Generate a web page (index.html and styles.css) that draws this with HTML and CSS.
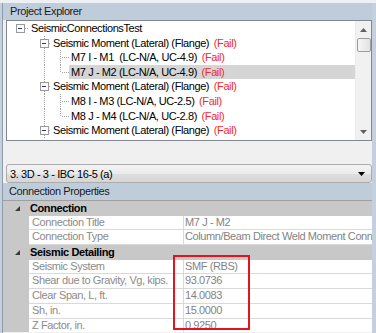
FILE: index.html
```html
<!DOCTYPE html>
<html>
<head>
<meta charset="utf-8">
<title>Project Explorer</title>
<link rel="stylesheet" href="styles.css">
</head>
<body>
<div class="window">
  <div class="frame">
    <div class="pane-title">Project Explorer</div>
    <div class="explorer">
      <div class="tree">
        <ul class="tree-list">
          <li class="node">
            <svg class="guides" width="22" height="14.6" viewBox="0 0 22 14.6">
              <line class="dot" x1="18" y1="7.5" x2="22" y2="7.5"/>
              <rect class="box" x="9.5" y="3.5" width="8" height="8"/>
              <line class="minus" x1="11.5" y1="7.5" x2="15.5" y2="7.5"/>
            </svg>
            <span class="label">SeismicConnectionsTest</span>
          </li>
          <li class="node">
            <svg class="guides" width="37" height="14.6" viewBox="0 0 37 14.6">
              <line class="dot" x1="30.5" y1="0" x2="30.5" y2="14.6"/>
              <line class="dot" x1="35" y1="7.5" x2="37" y2="7.5"/>
              <rect class="box" x="26.5" y="3.5" width="8" height="8"/>
              <line class="minus" x1="28.5" y1="7.5" x2="32.5" y2="7.5"/>
            </svg>
            <span class="label">Seismic Moment (Lateral) (Flange) <span class="fail">(Fail)</span></span>
          </li>
          <li class="node">
            <svg class="guides" width="55" height="14.6" viewBox="0 0 55 14.6">
              <line class="dot" x1="30.5" y1="0" x2="30.5" y2="14.6"/>
              <line class="dot" x1="46.5" y1="0" x2="46.5" y2="14.6"/>
              <line class="dot" x1="48" y1="7.5" x2="55" y2="7.5"/>
            </svg>
            <span class="label">M7 I - M1&nbsp; (LC-N/A, UC-4.9) <span class="fail">(Fail)</span></span>
          </li>
          <li class="node selected">
            <svg class="guides" width="55" height="14.6" viewBox="0 0 55 14.6">
              <line class="dot" x1="30.5" y1="0" x2="30.5" y2="14.6"/>
              <line class="dot" x1="46.5" y1="0" x2="46.5" y2="7.5"/>
              <line class="dot" x1="48" y1="7.5" x2="55" y2="7.5"/>
            </svg>
            <span class="label">M7 J - M2 (LC-N/A, UC-4.9) <span class="fail">(Fail)</span></span>
          </li>
          <li class="node">
            <svg class="guides" width="37" height="14.6" viewBox="0 0 37 14.6">
              <line class="dot" x1="30.5" y1="0" x2="30.5" y2="14.6"/>
              <line class="dot" x1="35" y1="7.5" x2="37" y2="7.5"/>
              <rect class="box" x="26.5" y="3.5" width="8" height="8"/>
              <line class="minus" x1="28.5" y1="7.5" x2="32.5" y2="7.5"/>
            </svg>
            <span class="label">Seismic Moment (Lateral) (Flange) <span class="fail">(Fail)</span></span>
          </li>
          <li class="node">
            <svg class="guides" width="55" height="14.6" viewBox="0 0 55 14.6">
              <line class="dot" x1="30.5" y1="0" x2="30.5" y2="14.6"/>
              <line class="dot" x1="46.5" y1="0" x2="46.5" y2="14.6"/>
              <line class="dot" x1="48" y1="7.5" x2="55" y2="7.5"/>
            </svg>
            <span class="label">M8 I - M3 (LC-N/A, UC-2.5) <span class="fail">(Fail)</span></span>
          </li>
          <li class="node">
            <svg class="guides" width="55" height="14.6" viewBox="0 0 55 14.6">
              <line class="dot" x1="30.5" y1="0" x2="30.5" y2="14.6"/>
              <line class="dot" x1="46.5" y1="0" x2="46.5" y2="7.5"/>
              <line class="dot" x1="48" y1="7.5" x2="55" y2="7.5"/>
            </svg>
            <span class="label">M8 J - M4 (LC-N/A, UC-2.8) <span class="fail">(Fail)</span></span>
          </li>
          <li class="node">
            <svg class="guides" width="37" height="14.6" viewBox="0 0 37 14.6">
              <line class="dot" x1="30.5" y1="0" x2="30.5" y2="14.6"/>
              <line class="dot" x1="35" y1="7.5" x2="37" y2="7.5"/>
              <rect class="box" x="26.5" y="3.5" width="8" height="8"/>
              <line class="minus" x1="28.5" y1="7.5" x2="32.5" y2="7.5"/>
            </svg>
            <span class="label">Seismic Moment (Lateral) (Flange) <span class="fail">(Fail)</span></span>
          </li>
        </ul>
        <div class="vscroll">
          <div class="sb-btn">
            <svg width="7" height="4" viewBox="0 0 7 4"><polygon points="0,4 3.5,0 7,4"/></svg>
          </div>
          <div class="sb-thumb"></div>
          <div class="sb-track"></div>
          <div class="sb-btn">
            <svg width="7" height="4" viewBox="0 0 7 4"><polygon points="0,0 7,0 3.5,4"/></svg>
          </div>
        </div>
      </div>
      <div class="combo">
        <span class="combo-text">3. 3D - 3 - IBC 16-5 (a)</span>
        <svg class="combo-arrow" width="7" height="4" viewBox="0 0 7 4"><polygon points="0,0 7,0 3.5,4"/></svg>
      </div>
    </div>
    <div class="pane-title props-title">Connection Properties</div>
    <div class="grid">
      <div class="cat">
        <span class="glyph"><svg width="5" height="5" viewBox="0 0 5 5"><polygon points="5,0 5,5 0,5"/></svg></span>Connection
      </div>
      <div class="prop"><span class="gut"></span><span class="name">Connection Title</span><span class="value">M7 J - M2</span></div>
      <div class="prop"><span class="gut"></span><span class="name">Connection Type</span><span class="value">Column/Beam Direct Weld Moment Connection</span></div>
      <div class="cat">
        <span class="glyph"><svg width="5" height="5" viewBox="0 0 5 5"><polygon points="5,0 5,5 0,5"/></svg></span>Seismic Detailing
      </div>
      <div class="prop"><span class="gut"></span><span class="name">Seismic System</span><span class="value">SMF (RBS)</span></div>
      <div class="prop"><span class="gut"></span><span class="name">Shear due to Gravity, Vg, kips.</span><span class="value">93.0736</span></div>
      <div class="prop"><span class="gut"></span><span class="name">Clear Span, L, ft.</span><span class="value">14.0083</span></div>
      <div class="prop"><span class="gut"></span><span class="name">Sh, in.</span><span class="value">15.0000</span></div>
      <div class="prop"><span class="gut"></span><span class="name">Z Factor, in.</span><span class="value">0.9250</span></div>
      <div class="mark"></div>
    </div>
  </div>
</div>
</body>
</html>
```

FILE: styles.css
```css
*{margin:0;padding:0;list-style:none;box-sizing:border-box;}
body{width:376px;height:333px;overflow:hidden;background:#c3d0dd;font-family:"Liberation Sans",Arial,sans-serif;font-size:11px;letter-spacing:-0.4px;color:#000;}
.window{border-top:3px solid #eef1f4;height:333px;}
.frame{margin-left:2px;width:370px;height:330px;border-left:1px solid #8f9cab;background:#f0f0f0;}

.pane-title{height:17px;line-height:17px;padding-left:7px;background:#bfcddb;color:#1b1b1b;white-space:nowrap;}
.props-title{padding-left:6px;}

.explorer{padding-left:3px;}
.tree{display:flex;width:366px;height:121px;border:1px solid #828790;background:#fff;}
.tree-list{width:348px;overflow:hidden;}
.node{display:flex;height:14.6px;align-items:stretch;}
.guides{flex:none;display:block;margin-left:7px;}
.guides .dot{stroke:#a0a0a0;stroke-width:1;stroke-dasharray:1 1;shape-rendering:crispEdges;}
.guides .box{fill:#fbfbfb;stroke:#9a9a9a;stroke-width:1;shape-rendering:crispEdges;}
.guides .minus{stroke:#2b3a4e;stroke-width:1;shape-rendering:crispEdges;}
.label{flex:1;padding-left:2px;line-height:14.6px;white-space:nowrap;}
.node:first-child .guides{margin-left:0;}
.node:first-child .label{padding-left:2px;}
.selected .label{background:#d5d5d5;}
.fail{color:#f02c2c;margin-left:2px;}

.vscroll{width:16px;display:flex;flex-direction:column;background:#f1f1f1;border-left:1px solid #ececec;}
.sb-btn{height:17px;display:flex;align-items:center;justify-content:center;}
.sb-btn polygon{fill:#5f5f5f;}
.sb-thumb{height:14px;margin:0 0 0 1px;border:1px solid #9d9d9d;border-radius:2px;background:linear-gradient(to right,#f6f6f6,#e3e3e3);}
.sb-track{flex:1;}

.combo{display:flex;align-items:center;margin-top:23px;width:366px;height:19px;border:1px solid #acacac;border-radius:3px;background:linear-gradient(#f3f3f3,#ebebeb 50%,#dedede 51%,#d6d6d6);padding:0 6px 0 3px;}
.combo-text{flex:1;white-space:nowrap;}
.combo-arrow polygon{fill:#000;}

.grid{position:relative;border-top:1px solid #a0a0a0;height:132px;overflow:hidden;}
.cat{display:flex;align-items:center;height:14.7px;background:#c8c8c8;font-weight:bold;white-space:nowrap;}
.glyph{width:27px;display:flex;justify-content:flex-start;padding-left:12px;}
.glyph polygon{fill:#3a3a3a;}
.prop{display:grid;grid-template-columns:26px 155px 1fr;height:14.7px;line-height:13.7px;}
.gut{background:#c8c8c8;}
.name{padding-left:3px;border-right:1px solid #d9d9d9;border-bottom:1px solid #d9d9d9;background:#fff;color:#8b8b8b;white-space:nowrap;overflow:hidden;}
.value{padding-left:1px;border-bottom:1px solid #d9d9d9;background:#fff;color:#838383;white-space:nowrap;overflow:hidden;}
.mark{position:absolute;left:170px;top:54px;width:77px;height:75px;border:2px solid #e3141e;}
```
